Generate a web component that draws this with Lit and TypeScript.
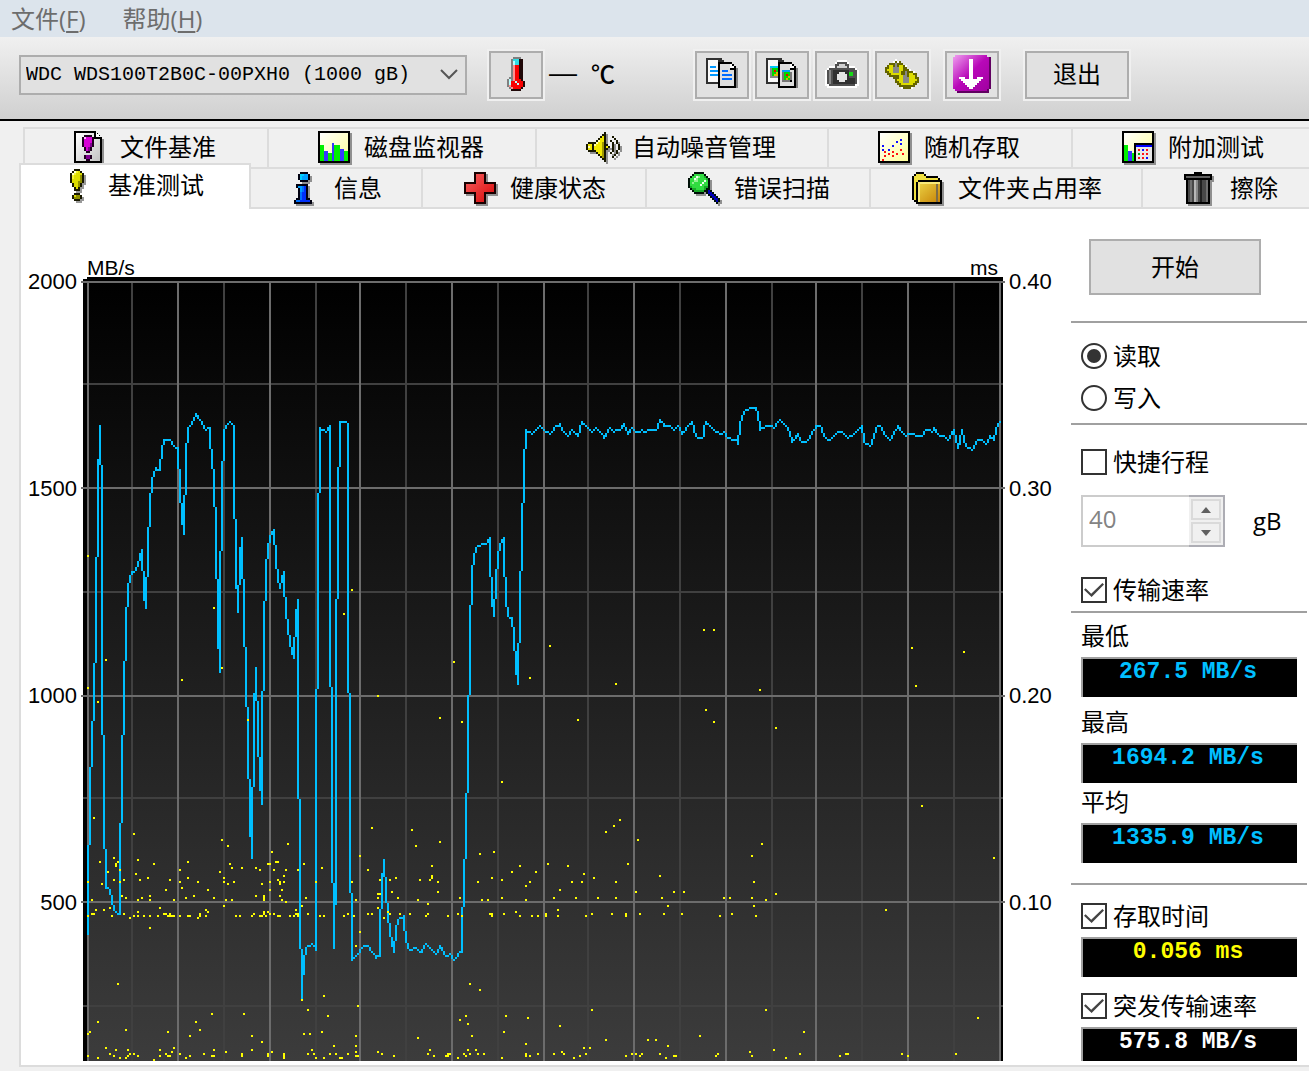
import { LitElement, html, svg, css } from "lit";
import { customElement, property, state } from "lit/decorators.js";

/* ---------- icons: one unit is one art pixel, drawn two screen pixels wide ---------- */

const pixels = (rows: string[], palette: Record<string, string>) => {
  const paths: Record<string, string> = {};
  rows.forEach((row, y) =>
    [...row].forEach((c, x) => {
      if (palette[c]) paths[c] = (paths[c] ?? "") + `M${x} ${y}h1v1h-1z`;
    })
  );
  return Object.entries(paths).map(([c, d]) => svg`<path d=${d} fill=${palette[c]} />`);
};

const BANG = [
  "..kkk..",
  ".kwlyk.",
  "kwlyyyk",
  "klyyydk",
  "klyyydk",
  "kyyyydk",
  "kyyyddk",
  ".kyydk.",
  ".kyydk.",
  "..kyk..",
  "..kkk..",
  ".......",
  "..kkk..",
  ".kyddk.",
  ".kdddk.",
  "..kkk..",
];

const INFO = [
  "...kkkk..",
  "..kccbbk.",
  "..kcbbbk.",
  "..kcbbbk.",
  "...kkkk..",
  ".........",
  ".kkkkkk..",
  ".kbbsmk..",
  "..kbsmk..",
  "..kbsmk..",
  "..ksmmk..",
  "..ksmmk..",
  "..ksmmk..",
  ".kksmmkk.",
  "kssmmmmmk",
  "kkkkkkkkk",
];

const THERMO = [
  "...gggg..",
  "..gccckk.",
  "..gwcckk.",
  "..gwcckk.",
  "..gprrkk.",
  "..gprrkk.",
  "..gprrkk.",
  "..gprrkk.",
  "..gprrkk.",
  "..gprrkk.",
  ".ggprrkk.",
  "gwgprrrk.",
  "gwrrwrrrk",
  "gwrrrwrrk",
  "gprrrrrrk",
  ".gprrrrk.",
  "..kkkkk..",
];

const SPEAKER = [
  ".........k.......",
  "........kk.......",
  ".......kyk...k...",
  "......kyyk....k..",
  ".....kwyyk..k..k.",
  ".kkkkwyydk...k.k.",
  "kyykwyyydkk..k..k",
  "kwykyyyydkyk.k..k",
  "kyykyyyydkk..k..k",
  ".kkkkyyydk...k.k.",
  ".....kyydk..k..k.",
  "......kydk....k..",
  ".......kdk...k...",
  "........kk.......",
  ".........k.......",
];

const GEARS = [
  ".....o...........",
  "....okok.........",
  "..kkkgkkk........",
  ".kyykgkyyko......",
  "kkyygggyykk......",
  "kyyygggyykkko....",
  "kkyygggykkgkkko..",
  ".kkyyyyykkgkyykk.",
  "..kkkkkyyggkyyyk.",
  "....kkkyygggyyykk",
  ".....kyyygggyyyyk",
  ".....kkyygggyyykk",
  "......kkyyyyyykk.",
  ".......kkkkkkkk..",
  "........okkkko...",
];

const MAGNIFIER = [
  "...kkkkk.........",
  "..kgggggk........",
  ".kggwlggdk.......",
  "kggwlggggdk......",
  "kggllgggwgk......",
  "kglggggwggk......",
  "kgggggwgggk......",
  "kdggggggddk......",
  ".kddggggdkk......",
  "..kdddddkkbk.....",
  "...kkkkk.kbbk....",
  "..........kbbk...",
  "...........kbbk..",
  "............kbbk.",
  ".............kbk.",
  "..............k..",
];

const frame = svg`<rect width="16" height="16" fill="#000" />
  <rect x="1" y="1" width="14" height="14" fill="url(#paper)" />`;

const sheets = (back: unknown, front: unknown) => svg`
  <path d="M7 15h9V5h-1v10z" fill="#808080" />
  <path d="M0 0h8v1h1v12H0z" fill="#303030" /><path d="M1 1h5v3h2v8H1z" fill="#fafafa" />
  ${back}
  <path d="M6 2h7v1h1v1h1v11H6z" fill="#000" /><path d="M7 3h5v3h2v8H7z" fill="#dedede" />
  <path d="M12 3h1v1h1v1h-2z" fill="#fff" />
  ${front}`;

const ICONS: Record<string, { w: number; h: number; shadow?: boolean; art: unknown }> = {
  thermo: {
    w: 9, h: 17,
    art: pixels(THERMO, { g: "#808080", c: "#30dce4", w: "#b8ffff", p: "#ff9090", r: "#f80000", k: "#200808" }),
  },
  copyText: {
    w: 16, h: 16,
    art: sheets(
      svg`<path d="M2 4h3v1H2zM2 6h4v1H2zM2 8h4v1H2z" fill="#0098ff" />`,
      svg`<path d="M8 6h3v1H8zM8 8h5v1H8zM8 10h5v1H8z" fill="#006cff" />`
    ),
  },
  copyImage: {
    w: 16, h: 16,
    art: sheets(
      svg`<path d="M2 4h4v1H2z" fill="#00c8f8" /><path d="M2 5h4v5H2z" fill="#888" /><path d="M3 5h3v4H3z" fill="#00d800" />
        <path d="M4 6h1v1H4z" fill="#f00000" /><path d="M5 7h1v2H4V8h1z" fill="#d8c000" />`,
      svg`<path d="M8 6h4v1H8z" fill="#00a0f8" /><path d="M8 7h5v5H8z" fill="#777" /><path d="M9 7h3v4H9z" fill="#00d800" />
        <path d="M10 8h1v1h-1z" fill="#f00000" /><path d="M11 9h1v1h-1v1h-1v-1h1z" fill="#d8b000" /><path d="M12 11h1v1h-1z" fill="#000" />`
    ),
  },
  camera: {
    w: 17, h: 14,
    art: svg`<path d="M5 1h1V0h5v1h1v2h3v1h1v1h1v8h-1v1H1v-1H0V5h1V4h1V3h3z" fill="#fff" />
      <path d="M6 1h5v1h1v2h3v1h1v7h-1v1H2v-1H1V5h1V4h3V2h1z" fill="#505050" />
      <path d="M7 2h3v1h1v1H6V3h1z" fill="#d0d0d0" />
      <path d="M4 5h8v7H4z" fill="#303030" /><path d="M2 5h1v7H2z" fill="#888" /><path d="M12 9h3v3h-3z" fill="#303030" />
      <path d="M7 6h3v1h1v3h-1v1H7v-1H6V7h1z" fill="#e4e4e4" /><path d="M12 6h2v2h-2z" fill="#18d818" />`,
  },
  gears: {
    w: 17, h: 15,
    art: pixels(GEARS, { k: "#646400", y: "#dcdc00", g: "#888888", o: "#ffffff" }),
  },
  arrow: {
    w: 19, h: 19,
    art: svg`<path d="M2 0h15v1h2v16h-1v2H2v-1H1v-1H0V1h2z" fill="#600060" />
      <path d="M1 0h16v1h1v16h-1v1H1v-1H0V1h1z" fill="url(#violet)" />
      <path d="M8 2h2v10h2v-1h3v1h-1v1h-1v1h-1v1h-1v1h-1v1H8v-1H7v-1H6v-1H5v-1H4v-1H3v-1h3v1h2z" fill="#fff" />`,
  },
  fileBench: {
    w: 16, h: 16, shadow: true,
    art: svg`<path d="M0 0h11v1h1v1h1v1h1v13H0z" fill="#000" /><path d="M1 1h9v3h3v11H1z" fill="url(#sheet)" />
      <path d="M11 1v2h2z" fill="#fff" />
      <g transform="translate(4 2)">${pixels(
        [".kkkk.", "kwmmmk", "kmmmmk", "kmmmmk", "kmmmdk", "kmmmdk", ".kmdk.", ".kmdk.", "..kk..", "......", ".kddk.", ".kddk.", "..kk.."],
        { k: "#200020", m: "#d800d8", w: "#ffb0ff", d: "#800090" }
      )}</g>`,
  },
  monitor: {
    w: 16, h: 16, shadow: true,
    art: svg`${frame}<path d="M1 7h2v8H1zM5 11h2v4H5zM8 7h3v8H8zM13 10h2v5h-2z" fill="#00f000" />
      <path d="M3 10h2v5H3zM7 6h1v9H7zM11 9h2v6h-2z" fill="#3838ff" />`,
  },
  speaker: {
    w: 16, h: 15, shadow: true,
    art: pixels(SPEAKER, { k: "#181800", y: "#f0e800", w: "#ffffb0", d: "#a09800" }),
  },
  random: {
    w: 16, h: 16, shadow: true,
    art: svg`${frame}<path d="M2 7h1v1H2zM2 9h1v1H2zM5 9h1v1H5zM7 7h1v1H7zM9 5h1v1H9zM11 4h1v1h-1zM11 6h1v1h-1z" fill="#1010ff" />
      <path d="M3 10h1v1H3zM3 12h1v1H3zM2 14h1v1H2zM5 11h1v1H5zM7 10h1v1H7zM7 12h1v1H7zM9 11h1v1H9zM11 9h1v1h-1zM12 11h1v1h-1z" fill="#ff1010" />`,
  },
  extra: {
    w: 16, h: 16, shadow: true,
    art: svg`${frame}<path d="M1 7h2v8H1zM5 11h1v4H5z" fill="#00f000" /><path d="M3 10h2v5H3z" fill="#3838ff" />
      <path d="M6 6h10v10H6z" fill="#000" /><path d="M7 7h8v1H7z" fill="#0000ff" /><path d="M7 8h8v7H7z" fill="#e8e8e8" />
      <path d="M8 9h1v1H8zM12 9h1v1h-1zM10 11h1v1h-1zM12 11h1v1h-1zM8 13h1v1H8zM10 13h1v1h-1z" fill="#ff1010" />
      <path d="M10 9h1v1h-1zM12 13h1v1h-1z" fill="#1010ff" /><path d="M8 11h1v1H8z" fill="#00b000" />`,
  },
  bench: {
    w: 16, h: 16, shadow: true,
    art: svg`<g transform="translate(4 0)">${pixels(BANG, { k: "#181800", w: "#ffffd0", l: "#f4f430", y: "#dcdc00", d: "#909000" })}</g>`,
  },
  info: {
    w: 16, h: 16, shadow: true,
    art: svg`<g transform="translate(3 0)">${pixels(INFO, { k: "#000010", c: "#00d0ff", b: "#00a0ff", s: "#0070ff", m: "#0030f8" })}</g>`,
  },
  health: {
    w: 16, h: 16, shadow: true,
    art: svg`<path d="M5 0h6v5h5v6h-5v5H5v-5H0V5h5z" fill="#180000" /><path d="M6 1h4v5h5v4h-5v5H6v-5H1V6h5z" fill="url(#red)" />`,
  },
  scan: {
    w: 16, h: 16, shadow: true,
    art: pixels(MAGNIFIER, { k: "#001008", g: "#30dc40", w: "#e8ffe8", l: "#90f090", d: "#18a828", b: "#0000b8" }),
  },
  folder: {
    w: 16, h: 16, shadow: true,
    art: svg`<path d="M2 0h4v1h1v1h6v1h1v1h1v12H2v-1H1v-1H0V2h1V1h1z" fill="#000" />
      <path d="M2 1h4v1h1v1h6v1H3v1H2v9H1V2h1z" fill="#f0e040" /><path d="M3 5h11v10H3z" fill="#f8e878" />
      <path d="M4 6h10v9H4z" fill="url(#gold)" /><path d="M12 6h1v9h-1z" fill="#7c6c48" />`,
  },
  trash: {
    w: 16, h: 16, shadow: true,
    art: svg`<path d="M5 0h4v1h5v3h-1v12H1V4H0V1h5z" fill="#000" /><path d="M1 2h12v1H1z" fill="#606060" />
      <path d="M2 4h10v11H2z" fill="#484848" /><path d="M3 4h1v11H3zM11 4h1v11h-1z" fill="#707070" />
      <path d="M5 4h1v11H5z" fill="#b8b8b8" /><path d="M6 4h1v11H6z" fill="#888" /><path d="M8 4h1v11H8z" fill="#202020" />`,
  },
};

@customElement("tune-icon")
class TuneIcon extends LitElement {
  @property() name = "";

  static styles = css`
    :host { display: flex; flex: none; }
    svg { display: block; overflow: visible; shape-rendering: crispEdges; }
    .shadow { filter: drop-shadow(2px 2px 0 rgba(0, 0, 0, 0.4)); }
  `;

  render() {
    const icon = ICONS[this.name];
    if (!icon) return html``;
    return html`<svg class=${icon.shadow ? "shadow" : ""} width=${icon.w * 2} height=${icon.h * 2}
      viewBox="0 0 ${icon.w} ${icon.h}" aria-hidden="true">
      <defs>
        <linearGradient id="paper" x2="1" y2="1"><stop stop-color="#fff" /><stop offset="1" stop-color="#ffff98" /></linearGradient>
        <linearGradient id="sheet" x2="1" y2="1"><stop stop-color="#fff" /><stop offset="1" stop-color="#c4c4c4" /></linearGradient>
        <linearGradient id="violet" x2="1" y2="1"><stop stop-color="#f0a0f0" /><stop offset="0.5" stop-color="#b808b8" /><stop offset="1" stop-color="#a000a0" /></linearGradient>
        <linearGradient id="red" x2="1" y2="1"><stop stop-color="#f86060" /><stop offset="1" stop-color="#d80808" /></linearGradient>
        <linearGradient id="gold" x2="1" y2="1"><stop stop-color="#e8cc40" /><stop offset="1" stop-color="#c88408" /></linearGradient>
      </defs>
      ${icon.art}
    </svg>`;
  }
}

/* ---------- chart ---------- */

const TRANSFER =
  "88,934 88,889 90,797 92,735 94,703 96,621 98,491 100,425 102,503 102,657 104,811 106,888 108,888 110,890 112,900 114,910 116,912 118,914 120,914 120,868 " +
  "122,775 124,693 126,625 128,585 130,577 132,572 136,569 138,563 140,555 142,549 144,593 146,607 148,545 150,505 152,479 154,471 156,468 160,470 162,447 164,440 170,440 172,444 " +
  "174,446 178,447 180,490 182,518 184,534 186,455 188,427 190,425 192,421 194,417 196,413 198,417 200,420 202,424 204,427 206,430 208,428 210,428 210,439 212,459 214,479 216,533 " +
  "218,625 220,671 220,609 222,489 224,429 226,425 228,423 230,421 232,424 234,427 234,473 236,565 238,611 240,555 242,537 244,619 246,673 248,739 250,817 252,857 254,715 256,667 " +
  "258,735 260,778 262,803 262,745 264,633 266,567 268,547 270,535 272,531 274,529 276,559 278,577 280,587 282,575 284,571 284,585 286,609 288,629 290,640 292,653 294,658 296,615 " +
  "298,599 298,699 300,899 302,1000 302,985 304,961 306,947 308,946 310,945 312,943 314,946 316,949 316,817 318,557 320,427 322,429 324,430 326,432 328,428 330,425 330,557 332,817 " +
  "334,948 336,860 336,685 338,509 340,422 346,422 348,423 348,559 350,827 352,960 354,957 356,956 358,953 360,950 362,948 364,946 368,946 370,949 372,952 374,954 376,958 378,956 " +
  "380,956 380,931 382,883 384,859 386,893 388,913 390,931 392,944 394,952 396,927 398,919 400,917 404,916 404,923 406,939 408,947 410,949 412,950 414,948 416,948 418,950 422,952 " +
  "424,946 426,943 428,946 430,948 432,950 434,952 436,954 438,949 440,946 442,950 444,954 446,956 450,954 452,958 454,960 456,957 458,954 460,952 462,952 462,929 464,881 466,833 " +
  "468,751 470,635 472,571 474,555 476,547 478,546 482,544 486,544 488,540 490,538 490,557 492,597 494,616 496,579 498,555 500,543 502,540 504,538 504,557 506,597 508,616 512,618 " +
  "514,635 516,667 518,684 520,601 522,537 524,465 526,430 528,432 530,432 532,434 534,431 536,430 538,428 540,426 542,428 544,430 546,432 548,432 550,434 552,431 554,428 556,426 " +
  "560,424 562,430 564,432 566,434 568,436 570,432 572,430 574,432 576,434 578,436 580,427 582,422 584,424 586,426 588,428 590,430 592,432 594,430 596,428 598,430 600,432 602,434 " +
  "604,438 606,434 608,430 610,428 612,430 614,432 616,430 620,429 622,426 624,424 626,430 628,434 630,430 632,428 634,430 636,432 640,432 642,430 646,432 648,430 656,430 658,426 " +
  "660,420 662,422 664,426 670,426 672,428 674,430 676,428 678,426 680,430 682,434 684,432 686,428 688,426 690,424 692,422 694,430 696,436 698,438 702,437 704,436 704,426 706,422 " +
  "708,424 710,426 712,428 714,430 716,432 718,432 720,434 724,432 728,438 736,439 738,444 740,423 742,415 744,411 746,410 750,408 756,408 758,415 760,425 760,430 762,428 766,426 " +
  "772,426 774,428 776,424 778,422 780,420 782,422 784,424 786,426 788,430 790,434 792,442 794,440 796,436 798,434 800,440 802,442 806,442 808,440 810,436 812,432 814,430 816,426 " +
  "820,426 822,430 824,436 826,438 828,440 830,440 832,438 834,436 836,434 838,432 842,432 844,434 846,436 848,438 850,436 854,434 856,432 858,430 860,428 862,426 864,442 866,444 " +
  "868,444 870,446 872,442 874,436 876,428 878,426 880,426 882,430 884,434 886,436 888,438 890,440 892,438 894,432 896,430 898,426 900,430 902,432 904,434 906,436 908,434 914,434 " +
  "916,436 922,436 924,432 926,430 930,430 932,432 934,428 936,432 938,434 940,436 944,436 946,438 948,440 950,436 952,432 954,430 956,440 958,448 960,440 962,430 964,440 966,446 " +
  "968,448 970,448 972,450 974,446 976,442 978,440 982,440 984,442 986,444 988,440 990,436 992,438 994,440 996,430 998,424 1000,422";

const ACCESS =
  "88,556 214,608 352,590 344,614 88,688 98,702 106,660 182,680 222,668 248,720 378,696 440,718 454,662 462,722 530,678 550,646 616,684 578,720 704,630 714,630 706,710 714,722 760,690 776,728 912,648 916,686 964,652 " +
  "94,818 134,834 222,840 228,846 114,858 100,862 118,862 116,864 116,866 138,860 108,872 120,870 154,864 188,862 180,870 136,874 140,880 114,880 124,880 120,882 148,878 188,878 170,880 180,882 198,882 88,882 102,884 " +
  "182,888 166,890 208,890 122,896 126,898 138,900 142,898 150,896 150,900 174,900 186,898 194,896 214,898 92,900 104,910 96,910 92,914 94,914 88,916 110,908 112,916 124,914 130,918 134,916 138,912 138,916 144,916 " +
  "150,916 158,916 160,908 164,914 166,914 168,916 170,914 170,916 172,916 174,916 180,916 188,916 190,916 198,918 200,914 200,916 206,910 206,916 208,912 150,928 118,984 220,872 230,864 232,868 242,868 224,878 " +
  "224,882 228,884 234,882 226,900 232,900 224,906 236,916 240,916 256,868 260,870 262,884 256,896 264,896 264,898 264,900 254,914 252,916 260,916 262,916 264,912 264,914 266,916 268,912 270,914 274,914 278,916 280,916 " +
  "272,852 268,864 270,864 274,870 276,862 278,862 288,844 286,870 284,876 278,880 280,882 280,884 284,882 270,882 270,890 282,890 280,896 282,900 286,902 290,916 296,910 296,914 298,914 298,916 294,916 298,870 304,864 " +
  "302,906 306,898 308,914 316,882 320,916 324,916 322,868 344,916 348,914 352,882 354,916 356,900 360,856 372,828 368,870 368,914 372,914 360,932 356,946 380,880 378,894 380,894 378,898 378,908 384,918 388,912 390,880 " +
  "392,892 390,914 396,878 398,898 400,914 410,914 412,830 416,846 440,842 432,866 432,876 432,878 430,880 420,880 438,882 438,892 418,900 428,904 428,914 426,916 448,916 458,914 462,916 460,898 " +
  "302,1000 324,996 358,1006 308,1010 328,1016 98,1022 90,1032 88,1034 126,1030 168,1032 196,1022 212,1014 200,1030 190,1036 244,1014 252,1036 262,1042 304,1034 310,1034 322,1032 356,1036 334,1046 356,1046 418,1038 " +
  "106,1048 116,1050 110,1054 114,1056 88,1056 98,1058 120,1058 128,1050 128,1056 130,1054 126,1058 134,1054 138,1056 154,1060 160,1050 160,1056 166,1054 168,1056 170,1056 172,1052 174,1048 180,1054 186,1058 190,1056 " +
  "204,1054 214,1050 212,1056 214,1056 226,1052 242,1054 242,1056 252,1050 268,1054 268,1056 272,1052 284,1054 284,1056 284,1058 308,1054 312,1050 314,1054 316,1058 324,1058 330,1054 336,1054 340,1058 342,1058 348,1054 " +
  "356,1052 356,1056 358,1056 378,1052 382,1054 394,1056 430,1050 428,1054 434,1056 446,1056 448,1056 448,1054 450,1054 458,1058 464,1054 466,1056 468,1050 460,1020 466,1016 468,1024 " +
  "502,782 922,806 620,820 614,826 606,832 638,840 480,854 494,852 520,866 512,872 536,872 478,882 492,878 502,880 526,886 530,882 548,864 568,866 560,890 572,882 582,882 584,874 594,878 616,882 628,864 660,876 636,892 " +
  "674,892 684,892 752,856 762,844 754,882 776,894 994,858 482,900 488,900 502,898 526,900 554,898 576,898 598,898 616,898 662,898 724,898 730,898 752,898 766,900 668,906 754,906 886,910 490,914 492,914 492,916 504,914 " +
  "516,912 520,916 532,916 538,916 546,914 546,916 558,910 558,916 586,916 592,914 612,914 626,914 626,916 640,914 664,914 682,914 720,916 732,914 756,916 470,984 480,990 592,1010 766,1010 506,1016 528,1018 560,1026 " +
  "504,1032 472,1036 526,1044 606,1040 648,1040 656,1040 668,1046 700,1036 804,1032 978,1018 476,1050 478,1054 470,1054 484,1054 502,1058 526,1054 526,1056 530,1056 538,1054 554,1054 562,1052 564,1054 574,1058 580,1056 " +
  "584,1048 590,1048 586,1054 626,1056 632,1054 636,1054 640,1056 642,1054 660,1054 666,1058 674,1056 676,1056 716,1056 718,1054 750,1052 752,1056 774,1050 786,1058 800,1054 840,1056 846,1054 848,1054 902,1054 908,1056 956,1054";

const parse = (text: string) => text.split(" ").map((p) => p.split(",").map(Number));

const accessPath = parse(ACCESS).map(([x, y]) => `M${x - 1} ${y}h2`).join("");

/* The transfer line is drawn unsmoothed on a grid of two-pixel cells: each column covers a run of rows. */
const stepped = (points: number[][]) => {
  const runs = new Map<number, [number, number]>();
  const cover = (x: number, from: number, to: number) => {
    const run = runs.get(x) ?? [Infinity, -Infinity];
    runs.set(x, [Math.min(run[0], from, to), Math.max(run[1], from, to)]);
  };
  const cells = points.map(([x, y]) => [Math.round(x / 2), Math.round(y / 2)]);
  cells.slice(1).forEach(([x1, y1], i) => {
    const [x0, y0] = cells[i];
    if (x0 === x1) return cover(x0, y0, y1);
    let last = y0;
    for (let x = x0 + 1; x <= x1; x++) {
      const y = Math.round(y0 + ((y1 - y0) * (x - x0)) / (x1 - x0));
      const inner = Math.max(0, Math.abs(y - last) - 1);
      const before = Math.floor(inner / 2);
      const dir = Math.sign(y - last);
      cover(x - 1, last, last + dir * before);
      cover(x, y, y - dir * (inner - before));
      last = y;
    }
  });
  return [...runs].map(([x, [top, bottom]]) => `M${x * 2} ${top * 2 - 1}V${bottom * 2 + 1}`).join("");
};

const transferPath = stepped(parse(TRANSFER));

const down = (xs: number[]) => xs.map((x) => `M${x} 281V1061`).join("");
const across = (ys: number[], x1: number, x2: number) => ys.map((y) => `M${x1} ${y}H${x2}`).join("");

@customElement("speed-chart")
class SpeedChart extends LitElement {
  static styles = css`
    :host {
      display: grid;
      grid-template-columns: 60px 1fr 66px;
      font-family: "Liberation Sans", Arial, sans-serif;
      font-size: 22px;
      color: #000;
    }
    .scale {
      display: flex;
      flex-direction: column;
      gap: 181px;
      margin: 0;
      padding: 60px 4px 0;
      list-style: none;
      line-height: 26px;
    }
    .left { text-align: right; }
    .plot { min-width: 0; }
    .units {
      display: flex;
      justify-content: space-between;
      padding: 50px 7px 0 6px;
      font-size: 21px;
      line-height: 18px;
    }
    svg { display: block; width: 100%; height: 784px; shape-rendering: crispEdges; }
    .minor { stroke: #404040; }
    .major { stroke: #6c6c6c; }
    .line { stroke: #00bfff; }
    .dots { stroke: #ffff00; }
    .stroke { fill: none; stroke-width: 2; }
  `;

  render() {
    return html`
      <ul class="scale left">
        ${["2000", "1500", "1000", "500"].map((t) => html`<li>${t}</li>`)}
      </ul>
      <div class="plot">
        <div class="units"><span>MB/s</span><span>ms</span></div>
        <svg viewBox="81 277 924 784" preserveAspectRatio="none" role="img" aria-label="MB/s, ms">
          <defs>
            <linearGradient id="night" x2="0" y2="1"><stop stop-color="#000" /><stop offset="1" stop-color="#3c3c3c" /></linearGradient>
          </defs>
          <path d="M83 279h4v-2h916v784H83z" fill="#000" />
          <rect x="87" y="281" width="914" height="780" fill="url(#night)" />
          <path class="stroke minor" d=${down([132, 224, 316, 406, 498, 588, 680, 772, 862, 954]) + across([384, 592, 798, 1006], 83, 1003)} />
          <path class="stroke major" d=${down([88, 178, 270, 360, 452, 544, 634, 726, 816, 908, 1000]) + across([282, 488, 696, 902], 81, 1005)} />
          <path class="stroke line" d=${transferPath} />
          <path class="stroke dots" d=${accessPath} />
        </svg>
      </div>
      <ul class="scale">
        ${["0.40", "0.30", "0.20", "0.10"].map((t) => html`<li>${t}</li>`)}
      </ul>
    `;
  }
}

/* ---------- application ---------- */

const TOP_TABS = [
  ["fileBench", "文件基准"],
  ["monitor", "磁盘监视器"],
  ["speaker", "自动噪音管理"],
  ["random", "随机存取"],
  ["extra", "附加测试"],
];
const BOTTOM_TABS = [
  ["bench", "基准测试"],
  ["info", "信息"],
  ["health", "健康状态"],
  ["scan", "错误扫描"],
  ["folder", "文件夹占用率"],
  ["trash", "擦除"],
];

@customElement("app-root")
class AppRoot extends LitElement {
  @state() private mode = "read";

  static styles = css`
    :host {
      display: block;
      min-height: 100vh;
      overflow: hidden;
      background: #f0f0f0;
      color: #000;
      font-family: "Open Sans", "Noto Sans CJK SC", sans-serif;
      font-size: 24px;
      line-height: 26px;
    }
    * { box-sizing: border-box; }
    button, input, select { font: inherit; color: inherit; margin: 0; border-radius: 0; }

    .menu { display: flex; gap: 37px; height: 37px; padding: 0 11px; align-items: center; background: #dce4ec; }
    .menu button { border: 0; padding: 0; background: none; color: #6d6d6d; }
    .menu u { text-underline-offset: 3px; text-decoration-thickness: 2px; }

    .toolbar {
      display: flex;
      align-items: center;
      height: 84px;
      padding: 0 19px 6px;
      background: linear-gradient(#f0f0f0, #d0d0d0);
      border-bottom: 2px solid #000;
    }
    .drive { display: grid; width: 448px; margin-right: 22px; }
    .drive > * { grid-area: 1 / 1; }
    .drive select {
      appearance: none;
      height: 40px;
      padding: 0 36px 0 5px;
      border: 2px solid #adadad;
      background: #e1e1e1;
      font-family: "Liberation Mono", monospace;
      font-size: 20px;
    }
    .drive svg { place-self: center end; margin-right: 9px; pointer-events: none; }
    .tool {
      display: flex;
      align-items: center;
      justify-content: center;
      width: 54px;
      height: 48px;
      padding: 0 0 2px;
      border: 2px solid #adadad;
      outline: 2px solid #f0f0f0;
      background: #e1e1e1;
    }
    .temp { display: flex; gap: 14px; width: 152px; padding: 0 6px 4px; font-family: "Noto Sans CJK SC", sans-serif; font-weight: 500; }
    .dash { font-family: "Liberation Sans", sans-serif; font-size: 28px; }
    .group { display: flex; gap: 6px; margin-right: 16px; }
    .exit { width: 104px; margin-left: 26px; }

    .tabs { display: flex; position: relative; }
    .upper { margin-top: 6px; padding-left: 23px; }
    .lower { padding-left: 19px; }
    .tab {
      display: flex;
      flex: none;
      align-items: center;
      justify-content: center;
      gap: 14px;
      border: 0 solid #dcdcdc;
      border-width: 2px 0 0 2px;
      background: #f0f0f0;
      white-space: nowrap;
    }
    .upper .tab { padding: 0 51px 2px 49px; height: 40px; }
    .lower .tab { padding: 0 39px 0 41px; height: 42px; border-bottom-width: 2px; }
    .lower .tab.active {
      z-index: 1;
      height: 46px;
      margin: -4px -6px 0 0;
      padding: 0 45px 4px 41px;
      border-width: 2px 2px 0 2px;
      background: #fff;
    }

    .panel {
      display: grid;
      grid-template-columns: 1fr 236px;
      margin-left: 19px;
      padding: 0 2px 4px 0;
      border: solid #dcdcdc;
      border-width: 0 0 2px 2px;
      background: #fff;
    }
    .side { display: flex; flex-direction: column; min-width: 0; }
    .start { height: 56px; margin: 30px 46px 26px 18px; border: 2px solid #adadad; background: #e1e1e1; }
    hr { width: 100%; height: 2px; margin: 0; border: 0; background: #a0a0a0; }
    .modes { display: flex; flex-direction: column; gap: 16px; margin: 0; padding: 20px 10px 12px; border: 0; }
    .option { display: flex; align-items: center; gap: 6px; }
    .option input { appearance: none; display: grid; place-content: center; flex: none; width: 26px; height: 26px; border: 2px solid #333; background: #fff; }
    .option input[type="radio"] { border-radius: 50%; }
    .option input[type="radio"]:checked::before { content: ""; width: 14px; height: 14px; border-radius: 50%; background: #333; }
    .option input[type="checkbox"]:checked::before {
      content: "";
      width: 20px;
      height: 14px;
      background: #444;
      clip-path: polygon(0 48%, 8% 38%, 36% 76%, 92% 0, 100% 10%, 38% 100%);
    }
    .stroke-block { display: flex; flex-direction: column; gap: 20px; padding: 24px 10px 30px; }
    .rate-block { padding: 0 10px 8px; }
    .spin-row { display: flex; align-items: center; gap: 28px; }
    .spin { display: flex; width: 144px; height: 52px; border: 2px solid #ccc; }
    .spin input { appearance: textfield; flex: 1; min-width: 0; padding: 0 6px 4px; border: 0; background: #fff; color: #838383; }
    .spin input::-webkit-inner-spin-button { appearance: none; }
    .arrows { display: flex; flex-direction: column; gap: 2px; width: 36px; margin: -2px; padding: 2px; border: solid #adadb4; border-width: 2px 2px 2px 0; background: #f0f0f0; }
    .arrows button { display: grid; flex: 1; place-content: center; padding: 0; border: 2px solid #dadada; background: #f0f0f0; }
    .readings { padding: 10px 10px 20px; }
    .lcd {
      display: block;
      height: 40px;
      margin-top: 8px;
      padding-right: 4px;
      border: solid #a0a0a0;
      border-width: 2px 0 0 2px;
      background: #000;
      color: #00bfff;
      font-family: "Liberation Mono", monospace;
      font-size: 23px;
      font-weight: bold;
      line-height: 26px;
      text-align: center;
      white-space: pre;
    }
    .gap { margin-top: 12px; }
    .tight { margin-top: 6px; }
    .extras { padding: 18px 10px 0; }
    .yellow { margin-bottom: 16px; color: #ffff00; }
    .white { height: 34px; color: #fff; }
  `;

  private tab([icon, label]: string[]) {
    const active = icon === "bench";
    return html`<button class="tab ${active ? "active" : ""}" role="tab" aria-selected=${active}>
      <tune-icon name=${icon}></tune-icon><span>${label}</span>
    </button>`;
  }

  private tool(icon: string, label: string) {
    return html`<button class="tool" aria-label=${label}><tune-icon name=${icon}></tune-icon></button>`;
  }

  private check(label: string, checked: boolean) {
    return html`<label class="option"><input type="checkbox" .checked=${checked} />${label}</label>`;
  }

  private radio(value: string, label: string) {
    return html`<label class="option">
      <input type="radio" name="mode" .checked=${this.mode === value} @change=${() => (this.mode = value)} />${label}
    </label>`;
  }

  render() {
    return html`
      <nav class="menu">
        <button>文件(<u>F</u>)</button>
        <button>帮助(<u>H</u>)</button>
      </nav>
      <header class="toolbar">
        <div class="drive">
          <select aria-label="磁盘">
            <option>WDC WDS100T2B0C-00PXH0 (1000 gB)</option>
          </select>
          <svg width="18" height="12" viewBox="0 0 18 12" aria-hidden="true">
            <path d="M1 1l8 8l8-8" fill="none" stroke="#555" stroke-width="2" />
          </svg>
        </div>
        ${this.tool("thermo", "温度")}
        <div class="temp"><span class="dash">—</span><span>℃</span></div>
        <div class="group">
          ${this.tool("copyText", "复制文本")} ${this.tool("copyImage", "复制图像")}
          ${this.tool("camera", "截图")} ${this.tool("gears", "选项")}
        </div>
        ${this.tool("arrow", "保存")}
        <button class="tool exit">退出</button>
      </header>

      <div role="tablist">
        <div class="tabs upper">${TOP_TABS.map((t) => this.tab(t))}</div>
        <div class="tabs lower">${BOTTOM_TABS.map((t) => this.tab(t))}</div>
      </div>

      <main class="panel">
        <speed-chart></speed-chart>
        <section class="side">
          <button class="start">开始</button>
          <hr />
          <fieldset class="modes" aria-label="模式">${this.radio("read", "读取")} ${this.radio("write", "写入")}</fieldset>
          <hr />
          <div class="stroke-block">
            ${this.check("快捷行程", false)}
            <div class="spin-row">
              <div class="spin">
                <input id="size" type="number" value="40" disabled />
                <div class="arrows">
                  <button disabled aria-label="增加"><svg width="10" height="6" viewBox="0 0 10 6"><path d="M0 6l5-6l5 6z" fill="#606060" /></svg></button>
                  <button disabled aria-label="减少"><svg width="10" height="6" viewBox="0 0 10 6"><path d="M0 0l5 6l5-6z" fill="#606060" /></svg></button>
                </div>
              </div>
              <label for="size">gB</label>
            </div>
          </div>
          <div class="rate-block">${this.check("传输速率", true)}</div>
          <hr />
          <div class="readings">
            <div>最低</div>
            <output class="lcd">267.5 MB/s</output>
            <div class="gap">最高</div>
            <output class="lcd">1694.2 MB/s</output>
            <div class="tight">平均</div>
            <output class="lcd">1335.9 MB/s</output>
          </div>
          <hr />
          <div class="extras">
            ${this.check("存取时间", true)}
            <output class="lcd yellow">0.056 ms</output>
            ${this.check("突发传输速率", true)}
            <output class="lcd white">575.8 MB/s</output>
          </div>
        </section>
      </main>
    `;
  }
}
